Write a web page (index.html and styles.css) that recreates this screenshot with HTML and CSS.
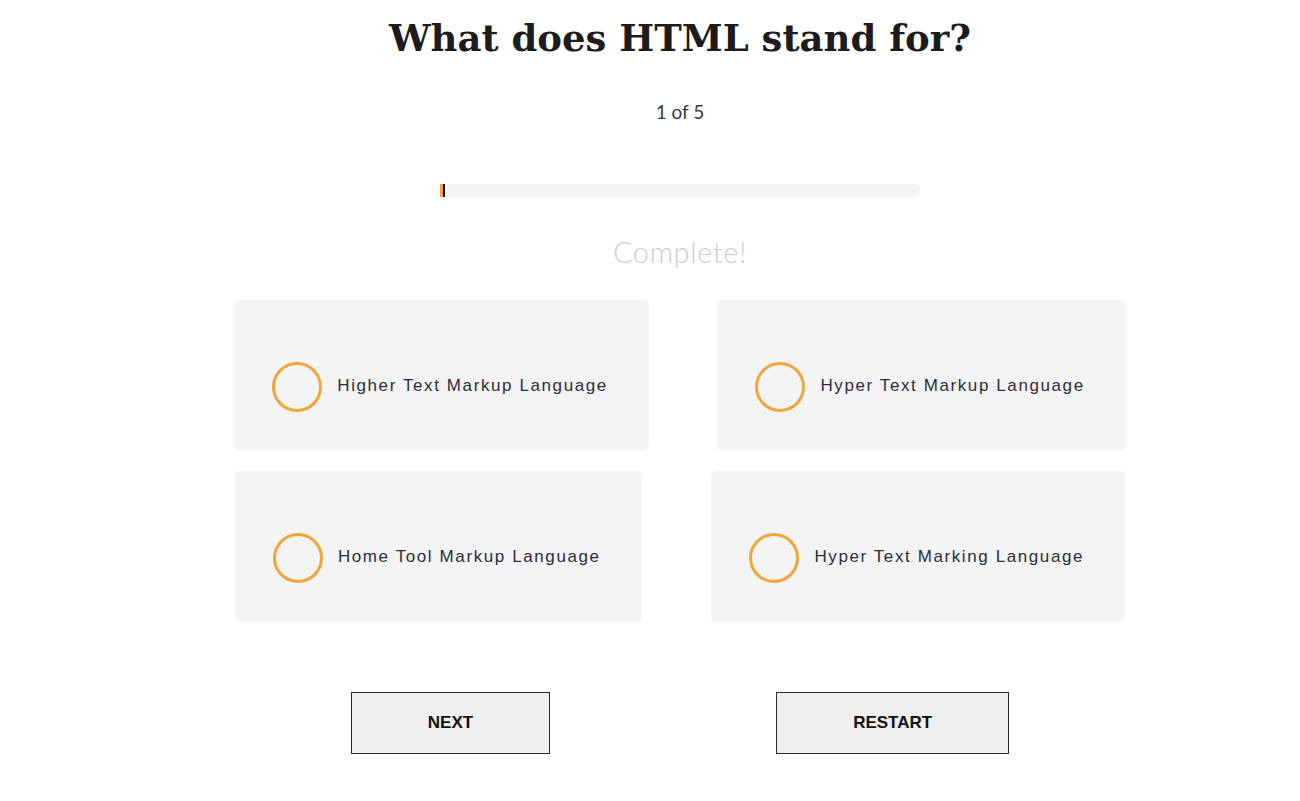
FILE: index.html
```html
<!DOCTYPE html>
<html lang="en">
<head>
<meta charset="utf-8">
<title>Quiz</title>
<link rel="stylesheet" href="styles.css">
</head>
<body>
<main class="quiz">
  <h1 class="question">What does HTML stand for?</h1>
  <p class="counter">1 of 5</p>
  <div class="progress"><div class="progress-fill"></div></div>
  <p class="complete">Complete!</p>
  <div class="options">
    <label class="option"><span class="radio"></span><span class="option-text">Higher Text Markup Language</span></label>
    <label class="option"><span class="radio"></span><span class="option-text">Hyper Text Markup Language</span></label>
    <label class="option"><span class="radio"></span><span class="option-text">Home Tool Markup Language</span></label>
    <label class="option"><span class="radio"></span><span class="option-text">Hyper Text Marking Language</span></label>
  </div>
  <div class="actions">
    <button class="btn">NEXT</button>
    <button class="btn">RESTART</button>
  </div>
</main>
</body>
</html>
```
FILE: styles.css
```css
html, body {
  margin: 0;
  padding: 0;
  background: #ffffff;
}

.quiz {
  width: 960px;
  margin: 0 auto;
  padding-left: 60px;
  box-sizing: content-box;
  text-align: center;
}

.question {
  margin: 14px 0 0;
  font-family: "DejaVu Serif", serif;
  font-weight: bold;
  font-size: 37px;
  line-height: 48px;
  color: #1c1c1c;
}

.counter {
  margin: 38px 0 0;
  font-family: "Lato", sans-serif;
  font-size: 19px;
  line-height: 24px;
  color: #333a44;
}

.progress {
  width: 480px;
  height: 13px;
  margin: 60px auto 0;
  background: #f4f4f4;
  border-radius: 0 5px 5px 0;
}

.progress-fill {
  width: 3px;
  height: 100%;
  background: #f2a33a;
  border-right: 2px solid #111;
}

.complete {
  margin: 37px 0 0;
  font-family: "Lato", sans-serif;
  font-weight: 300;
  font-size: 29px;
  line-height: 36px;
  letter-spacing: 0.6px;
  color: #c8cfd3;
}

.options {
  display: flex;
  flex-wrap: wrap;
  justify-content: space-around;
  row-gap: 20px;
  margin-top: 30px;
}

.option {
  display: flex;
  align-items: center;
  box-sizing: border-box;
  height: 151px;
  padding: 21px 41px 0 38px;
  background: #f4f4f4;
  border-radius: 5px;
}

.radio {
  width: 44px;
  height: 44px;
  border: 3px solid #f1a63c;
  border-radius: 50%;
  flex: none;
  margin-top: 1px;
}

.option-text {
  margin-left: 15px;
  font-family: "Liberation Sans", Arial, sans-serif;
  font-size: 17px;
  letter-spacing: 1.6px;
  color: #2b2d3a;
  white-space: nowrap;
}

.actions {
  display: flex;
  justify-content: center;
  gap: 226px;
  margin-top: 70px;
}

.btn {
  height: 62px;
  padding: 0 76px;
  background: #efefef;
  border: 1px solid #2a2a35;
  border-radius: 0;
  font-family: "Liberation Sans", Arial, sans-serif;
  font-weight: bold;
  font-size: 17px;
  color: #111;
}
```
